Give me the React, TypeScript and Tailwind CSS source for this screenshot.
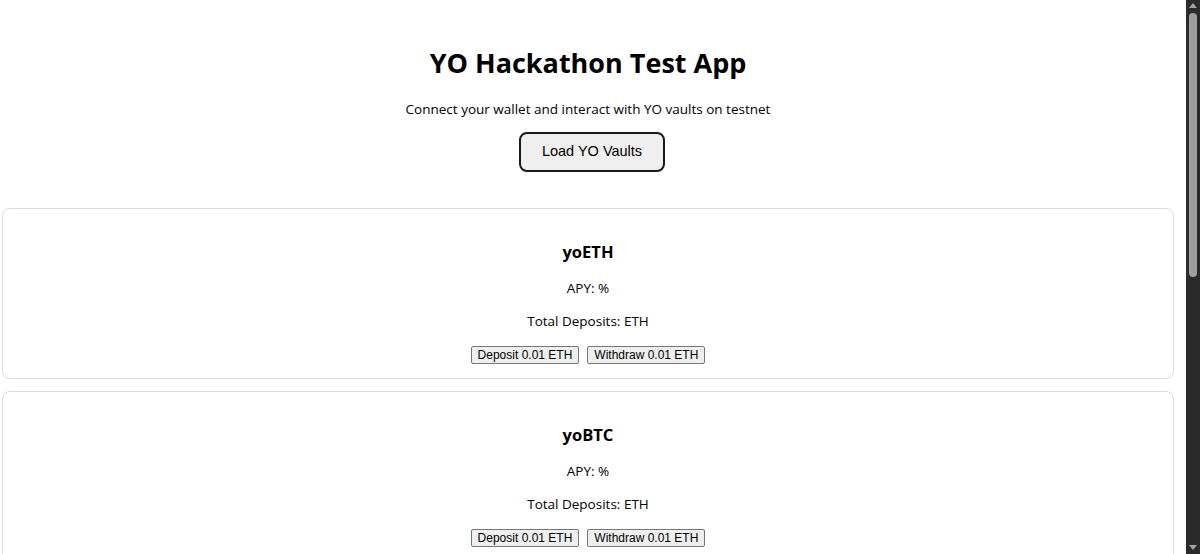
const vaults = [{ name: "yoETH" }, { name: "yoBTC" }];

function VaultCard({ name }: { name: string }) {
  return (
    <div className="mb-[12px] h-[171px] rounded-[8px] border border-[#dcdcdc] text-center">
      <h3 className="mt-[32px] text-[16.5px] font-bold leading-[22px]">{name}</h3>
      <p className="mt-[15px] text-[13.5px] leading-[20px]">APY: %</p>
      <p className="mt-[13px] text-[13.5px] leading-[20px]">Total Deposits: ETH</p>
      <div className="mt-[15px] flex justify-center gap-[8px] font-['Liberation_Sans',Arial,sans-serif] text-[12px]">
        <button className="h-[18px] rounded-[2px] border border-[#767676] bg-[#efefef] px-[6px] leading-[16px] text-black">
          Deposit 0.01 ETH
        </button>
        <button className="h-[18px] rounded-[2px] border border-[#767676] bg-[#efefef] px-[6px] leading-[16px] text-black">
          Withdraw 0.01 ETH
        </button>
      </div>
    </div>
  );
}

function Scrollbar() {
  return (
    <div className="flex h-full w-[14px] flex-col items-center bg-[#2b2b2b]">
      <div className="mt-[3px] h-0 w-0 border-x-[4px] border-b-[5px] border-x-transparent border-b-[#a3a3a3]" />
      <div className="mt-[5px] h-[264px] w-[8px] rounded-full bg-[#9f9f9f]" />
      <div className="flex-1" />
      <div className="mb-[4px] h-0 w-0 border-x-[4px] border-t-[5px] border-x-transparent border-t-[#a3a3a3]" />
    </div>
  );
}

export default function App() {
  return (
    <div className="flex h-[554px] overflow-hidden bg-white font-['Open_Sans','Noto_Sans',sans-serif] text-black">
      <div className="min-w-0 flex-1 pl-[2px] pr-[12px]">
        <header className="text-center">
          <h1 className="pt-[42px] text-[27px] font-bold leading-[42px]">YO Hackathon Test App</h1>
          <p className="mt-[15px] text-[13.5px] leading-[20px]">
            Connect your wallet and interact with YO vaults on testnet
          </p>
          <button className="ml-[8px] mt-[13px] h-[40px] rounded-[8px] border-2 border-[#1a1a1a] bg-[#efefef] px-[21px] font-['Liberation_Sans',Arial,sans-serif] text-[14.5px] text-black">
            Load YO Vaults
          </button>
        </header>
        <main className="mt-[36px]">
          {vaults.map((v) => (
            <VaultCard key={v.name} name={v.name} />
          ))}
        </main>
      </div>
      <Scrollbar />
    </div>
  );
}
